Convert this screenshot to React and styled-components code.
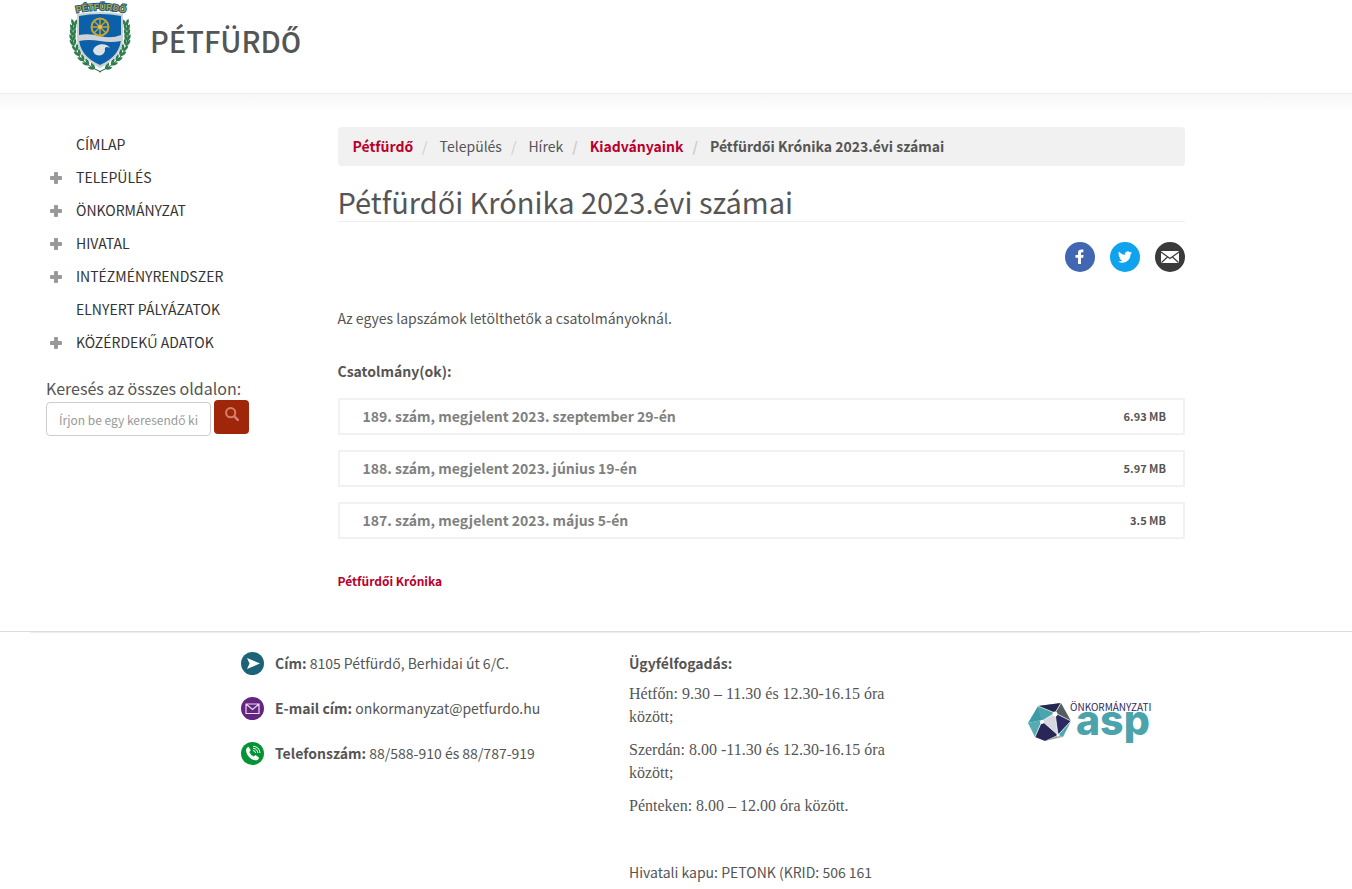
import React from "react";
import styled, { createGlobalStyle } from "styled-components";

const GlobalStyle = createGlobalStyle`
  *, *::before, *::after { box-sizing: border-box; }
  body {
    margin: 0;
    background: #fff;
    color: #555;
    font-family: "Noto Sans CJK JP", "Open Sans", sans-serif;
    font-size: 14px;
    line-height: 23px;
  }
  a { color: inherit; text-decoration: none; }
  ul, ol { list-style: none; margin: 0; padding: 0; }
  h1, h2, p { margin: 0; }
`;

const Page = styled.div`
  overflow: hidden;
`;

const Header = styled.header`
  display: flex;
  align-items: flex-start;
  gap: 19px;
  height: 94px;
  padding-left: 69px;
  border-bottom: 1px solid #eee;
`;

const SiteName = styled.a`
  padding-top: 20px;
  font-family: "Noto Sans CJK JP", Roboto, sans-serif;
  font-size: 29px;
  line-height: 40px;
  font-weight: 500;
`;

const Shade = styled.div`
  height: 17px;
  background: linear-gradient(#f7f7f7, #fff);
`;

const Container = styled.div`
  display: grid;
  grid-template-columns: 1fr 3fr;
  max-width: 1170px;
  margin-left: 30px;
`;

const Sidebar = styled.aside`
  padding: 17px 15px 0;
`;

const MenuItem = styled.li`
  display: grid;
  grid-template-columns: 22px 1fr;
  align-items: center;
  column-gap: 4px;
  height: 33px;
  padding-left: 5px;
  color: #333;
`;

const Expand = styled.button`
  display: flex;
  width: 12px;
  padding: 0;
  border: 0;
  background: none;
`;

const MenuLink = styled.a`
  grid-column: 2;
  white-space: nowrap;
`;

const SearchForm = styled.form`
  display: flex;
  flex-wrap: wrap;
  column-gap: 3px;
  margin-top: 17px;
  padding-left: 1px;
`;

const SearchLabel = styled.label`
  width: 100%;
  font-size: 16px;
  line-height: 24px;
`;

const SearchInput = styled.input`
  width: 165px;
  height: 34px;
  margin-top: 2px;
  padding: 6px 12px;
  border: 1px solid #ccc;
  border-radius: 4px;
  font: inherit;
  font-size: 12px;
  line-height: 20px;
  &::placeholder { color: #999; opacity: 1; }
`;

const SearchButton = styled.button`
  display: flex;
  justify-content: center;
  width: 35px;
  height: 34px;
  padding: 7px 0;
  border: 0;
  border-radius: 4px;
  background: #a0260a;
`;

const Main = styled.main`
  min-width: 0;
  padding: 16px 15px 0;
`;

const Breadcrumb = styled.ol`
  display: flex;
  height: 39px;
  padding: 8px 15px;
  border-radius: 4px;
  background: #f1f1f1;
`;

const Crumb = styled.li`
  color: ${(p) => (p.$accent ? "#b8002b" : "inherit")};
  font-weight: ${(p) => (p.$bold ? 700 : 400)};
  &:not(:first-child)::before {
    content: "/";
    padding: 0 12px 0 9px;
    color: #ccc;
  }
`;

const Title = styled.h1`
  margin-top: 15px;
  height: 41px;
  border-bottom: 1px solid #eee;
  font-size: 29px;
  line-height: 40px;
  font-weight: 400;
`;

const Share = styled.div`
  display: flex;
  justify-content: flex-end;
  gap: 15px;
  margin-top: 20px;
`;

const ShareLink = styled.a`
  display: flex;
  align-items: center;
  justify-content: center;
  width: 30px;
  height: 30px;
  border-radius: 50%;
  background: ${(p) => p.$color};
`;

const Intro = styled.p`
  margin-top: 35px;
`;

const Subheading = styled.h2`
  margin-top: 30px;
  font-size: 14px;
  font-weight: 700;
`;

const Files = styled.ul`
  display: grid;
  gap: 15px;
  margin-top: 15px;
`;

const FileRow = styled.li`
  display: flex;
  align-items: center;
  justify-content: space-between;
  height: 37px;
  padding: 0 17px 0 23px;
  border: 2px solid #f1f1f1;
  font-weight: 700;
`;

const FileLink = styled.a`
  color: #808080;
`;

const FileSize = styled.span`
  font-size: 11px;
`;

const Category = styled.a`
  display: block;
  margin-top: 30px;
  color: #b8002b;
  font-size: 12px;
  font-weight: 700;
`;

const Footer = styled.footer`
  margin-top: 39px;
  border-top: 1px solid #ddd;
`;

const FooterRule = styled.div`
  max-width: 1170px;
  height: 1px;
  margin-left: 30px;
  background: #eee;
`;

const FooterColumns = styled.div`
  display: grid;
  grid-template-columns: 388px 284px 1fr;
  padding: 19px 0 0 241px;
`;

const Contacts = styled.ul`
  display: grid;
  align-content: start;
  gap: 22px;
`;

const Contact = styled.li`
  display: flex;
  align-items: center;
  gap: 11px;
  height: 23px;
`;

const Hours = styled.section`
  display: flex;
  flex-direction: column;
  gap: 10px;
`;

const HoursTitle = styled.h2`
  margin-bottom: -3px;
  font-size: 14px;
  line-height: 23px;
  font-weight: 700;
`;

const HoursLine = styled.p`
  font-family: "Liberation Serif", serif;
  font-size: 16px;
`;

const Gateway = styled.p`
  margin-top: 34px;
`;

const AspLink = styled.a`
  padding: 49px 0 0 115px;
`;

const Crest = () => (
  <svg width="62" height="74" viewBox="0 0 62 74" role="img" aria-label="Pétfürdő címere">
    <defs>
      <path id="crest-arc" d="M7 13 Q31 7 57 13" />
      <path id="leaf" d="M0 0 Q-4 -2 -3 -7 Q1 -5 0 0" />
    </defs>
    <g fill="none" stroke="#17643a" strokeWidth="1">
      <path d="M4 23 C-1 48 10 62 32 72" />
      <path d="M58 23 C63 48 52 62 30 72" />
    </g>
    {[[5, 26, 4], [4, 31, 2], [4, 36, 0], [4, 41, -5], [5, 46, -12], [8, 51, -22], [11, 56, -32], [15, 61, -40], [20, 65, -50], [26, 69, -55]].map(([x, y, r]) => (
      <g key={y} fill="#2f7d4d">
        <use href="#leaf" transform={`translate(${x} ${y}) rotate(${r})`} />
        <use href="#leaf" transform={`translate(${x} ${y}) rotate(${r}) scale(-1 1)`} />
        <use href="#leaf" transform={`translate(${62 - x} ${y}) rotate(${-r})`} />
        <use href="#leaf" transform={`translate(${62 - x} ${y}) rotate(${-r}) scale(-1 1)`} />
      </g>
    ))}
    <path d="M8 14 Q31 10 54 14 V38 C54 51 46 60 31 68 C16 60 8 51 8 38 Z" fill="#cbd2d4" />
    <path d="M10 16 Q31 12 52 16 V38 C52 49 45 59 31 65 C17 59 10 49 10 38 Z" fill="#0c5fa9" />
    <path d="M10 35 Q20 33 31 36 T52 35 V41 Q42 43 31 41 T10 41 Z" fill="#cdd3d7" />
    <path d="M24 51 C25 43 38 42 41 48 Q35 45 36 51 C34 57 26 57 24 51 Z" fill="#dce1e4" />
    <g fill="none" stroke="#c7a52e" strokeWidth="1.4">
      <circle cx="31" cy="27" r="8.5" strokeWidth="2" />
      <path d="M31 18 V36 M22 27 H40 M25 21 L37 33 M37 21 L25 33" />
    </g>
    <circle cx="31" cy="27" r="2" fill="#e0c04b" />
    <text fontSize="9" fontWeight="700" fontFamily="Liberation Sans, sans-serif" fill="#b9a13e" stroke="#1c5b88" strokeWidth="2" paintOrder="stroke" textAnchor="middle">
      <textPath href="#crest-arc" startOffset="50%">PÉTFÜRDŐ</textPath>
    </text>
  </svg>
);

const PlusIcon = () => (
  <svg width="12" height="12" viewBox="0 0 12 12">
    <path d="M5 0h2q1 0 1 1v3h3q1 0 1 1v2q0 1-1 1H8v3q0 1-1 1H5q-1 0-1-1V8H1Q0 8 0 7V5q0-1 1-1h3V1q0-1 1-1z" fill="#999" />
  </svg>
);

const SearchIcon = () => (
  <svg width="14" height="14" viewBox="0 0 14 14" fill="none" stroke="#d3806e">
    <circle cx="5.7" cy="5.7" r="4.6" strokeWidth="2" />
    <path d="M9.3 9.3 L12.8 12.8" strokeWidth="2.6" strokeLinecap="round" />
  </svg>
);

const FacebookIcon = () => (
  <svg width="30" height="30" viewBox="0 0 30 30">
    <path d="M13 22v-6.200h-2.500v-2.900H13v-2.100C13 8.500 14.500 7.500 16.500 7.500c.9 0 1.600.1 1.900.2v2.500h-1.200c-1 0-1.200.5-1.200 1.200v1.500h2.600l-.4 2.900H16V22z" fill="#fff" />
  </svg>
);

const TwitterIcon = () => (
  <svg width="14" height="14" viewBox="0 0 24 24">
    <path d="M24 4.600a10 10 0 0 1-2.800.8 5 5 0 0 0 2.100-2.700 10 10 0 0 1-3.100 1.200 4.900 4.900 0 0 0-8.400 4.500A14 14 0 0 1 1.700 3.200a4.900 4.900 0 0 0 1.500 6.500 5 5 0 0 1-2.200-.6v.1a4.900 4.900 0 0 0 3.900 4.800 5 5 0 0 1-2.200.1 4.900 4.900 0 0 0 4.600 3.400A9.900 9.900 0 0 1 0 19.500a14 14 0 0 0 7.500 2.200c9.100 0 14-7.500 14-14v-.6A10 10 0 0 0 24 4.600z" fill="#fff" />
  </svg>
);

const MailIcon = () => (
  <svg width="18" height="12" viewBox="0 0 18 12">
    <rect width="18" height="12" rx="1" fill="#fff" />
    <path d="M0 1 L9 7.500 L18 1 M0.500 11.500 L6.500 6 M17.500 11.500 L11.500 6" fill="none" stroke="#3a3a3a" strokeWidth="1.2" />
  </svg>
);

const AddressIcon = () => (
  <svg width="23" height="23" viewBox="0 0 23 23">
    <circle cx="11.500" cy="11.500" r="11.500" fill="#1c6378" />
    <path d="M6 6 L19 11.500 L6 17 L8.500 11.500 Z" fill="#fff" />
  </svg>
);

const EnvelopeIcon = () => (
  <svg width="23" height="23" viewBox="0 0 23 23">
    <circle cx="11.500" cy="11.500" r="11.500" fill="#642580" />
    <path d="M5 7H18V16.500H5Z M5 7L11.500 12.500L18 7" fill="none" stroke="#e9dcf0" strokeWidth="1.200" />
  </svg>
);

const PhoneIcon = () => (
  <svg width="23" height="23" viewBox="0 0 23 23">
    <circle cx="11.500" cy="11.500" r="11.500" fill="#069335" />
    <path d="M7.500 4.800 L9.800 8.300 L8.300 10 Q9.500 13 12.800 14.600 L14.400 13 L18 15.400 Q17.500 18.300 14.600 18.300 C9.500 17.800 5.500 13.500 5 8.300 Q5 5.500 7.500 4.800Z" fill="#fff" />
    <path d="M12 8.500 Q14.300 8.800 14.700 11 M12 6.300 Q16.300 6.600 16.900 11 M12 4.200 Q18.300 4.600 19 11" fill="none" stroke="#fff" strokeWidth="1" />
  </svg>
);

const AspLogo = () => (
  <svg width="128" height="44" viewBox="0 0 128 44" overflow="visible" role="img" aria-label="Önkormányzati ASP">
    <path d="M10 5 L33 2 L14 19 Z" fill="#4aa5ad" />
    <path d="M10 5 L14 19 L0 22 Z" fill="#3d9ba5" />
    <path d="M0 22 L14 19 L7 36 Z" fill="#55adb4" />
    <path d="M10 5 L33 2 L27 12 Z" fill="#26264f" />
    <path d="M10 5 L27 12 L14 21 Z" fill="#4aa5ad" />
    <path d="M33 2 L43 20 L27 12 Z" fill="#555d61" />
    <path d="M14 20 L27 12 L30 34 Z" fill="#d6d8dd" />
    <path d="M27 12 L43 20 L30 34 Z" fill="#2b2a60" />
    <path d="M14 20 L30 34 L17 40 L7 36 Z" fill="#282757" />
    <path d="M43 20 L35 36 L30 34 Z" fill="#50a8b0" />
    <path d="M17 40 L30 34 L35 36 Z" fill="#a4a8ad" />
    <path d="M10 5 L27 12 L43 20 M14 20 L27 12 L33 2 M14 20 L30 34 L27 12 M14 20 L7 36 M30 34 L43 20" stroke="#fff" strokeWidth=".7" fill="none" />
    <circle cx="27" cy="13" r="2.500" fill="#fff" />
    <circle cx="14" cy="21" r="2" fill="#fff" />
    <circle cx="30" cy="34" r="1.500" fill="#fff" />
    <text x="48" y="34" fontFamily="Inter, sans-serif" fontWeight="800" fontSize="41" fill="#4ba3ac">asp</text>
    <text x="42" y="10" fontFamily="Noto Sans CJK JP, sans-serif" fontSize="10" fill="#2b2a5c">ÖNKORMÁNYZATI</text>
  </svg>
);

const menu = [
  ["CÍMLAP", false],
  ["TELEPÜLÉS", true],
  ["ÖNKORMÁNYZAT", true],
  ["HIVATAL", true],
  ["INTÉZMÉNYRENDSZER", true],
  ["ELNYERT PÁLYÁZATOK", false],
  ["KÖZÉRDEKŰ ADATOK", true],
];

const files = [
  ["189. szám, megjelent 2023. szeptember 29-én", "6.93 MB"],
  ["188. szám, megjelent 2023. június 19-én", "5.97 MB"],
  ["187. szám, megjelent 2023. május 5-én", "3.5 MB"],
];

export default function App() {
  return (
    <Page lang="hu">
      <GlobalStyle />
      <Header>
        <Crest />
        <SiteName href="#">PÉTFÜRDŐ</SiteName>
      </Header>
      <Shade />
      <Container>
        <Sidebar>
          <nav>
            <ul>
              {menu.map(([label, expandable]) => (
                <MenuItem key={label}>
                  {expandable && (
                    <Expand type="button" aria-label={`${label} megnyitása`}>
                      <PlusIcon />
                    </Expand>
                  )}
                  <MenuLink href="#">{label}</MenuLink>
                </MenuItem>
              ))}
            </ul>
          </nav>
          <SearchForm>
            <SearchLabel htmlFor="search">Keresés az összes oldalon:</SearchLabel>
            <SearchInput id="search" type="text" placeholder="Írjon be egy keresendő kifejezést" />
            <SearchButton type="submit" aria-label="Keresés">
              <SearchIcon />
            </SearchButton>
          </SearchForm>
        </Sidebar>
        <Main>
          <Breadcrumb>
            <Crumb $accent $bold><a href="#">Pétfürdő</a></Crumb>
            <Crumb>Település</Crumb>
            <Crumb>Hírek</Crumb>
            <Crumb $accent $bold><a href="#">Kiadványaink</a></Crumb>
            <Crumb $bold>Pétfürdői Krónika 2023.évi számai</Crumb>
          </Breadcrumb>
          <Title>Pétfürdői Krónika 2023.évi számai</Title>
          <Share>
            <ShareLink href="#" $color="#4267b2" aria-label="Facebook"><FacebookIcon /></ShareLink>
            <ShareLink href="#" $color="#0fa3ee" aria-label="Twitter"><TwitterIcon /></ShareLink>
            <ShareLink href="#" $color="#3a3a3a" aria-label="E-mail"><MailIcon /></ShareLink>
          </Share>
          <Intro>Az egyes lapszámok letölthetők a csatolmányoknál.</Intro>
          <Subheading>Csatolmány(ok):</Subheading>
          <Files>
            {files.map(([name, size]) => (
              <FileRow key={name}>
                <FileLink href="#">{name}</FileLink>
                <FileSize>{size}</FileSize>
              </FileRow>
            ))}
          </Files>
          <Category href="#">Pétfürdői Krónika</Category>
        </Main>
      </Container>
      <Footer>
        <FooterRule />
        <FooterColumns>
          <Contacts>
            <Contact><AddressIcon /><span><b>Cím:</b> 8105 Pétfürdő, Berhidai út 6/C.</span></Contact>
            <Contact><EnvelopeIcon /><span><b>E-mail cím:</b> onkormanyzat@petfurdo.hu</span></Contact>
            <Contact><PhoneIcon /><span><b>Telefonszám:</b> 88/588-910 és 88/787-919</span></Contact>
          </Contacts>
          <Hours>
            <HoursTitle>Ügyfélfogadás:</HoursTitle>
            <HoursLine>Hétfőn: 9.30 – 11.30 és 12.30-16.15 óra között;</HoursLine>
            <HoursLine>Szerdán: 8.00 -11.30 és 12.30-16.15 óra között;</HoursLine>
            <HoursLine>Pénteken: 8.00 – 12.00 óra között.</HoursLine>
            <Gateway>Hivatali kapu: PETONK (KRID: 506 161</Gateway>
          </Hours>
          <AspLink href="#"><AspLogo /></AspLink>
        </FooterColumns>
      </Footer>
    </Page>
  );
}
